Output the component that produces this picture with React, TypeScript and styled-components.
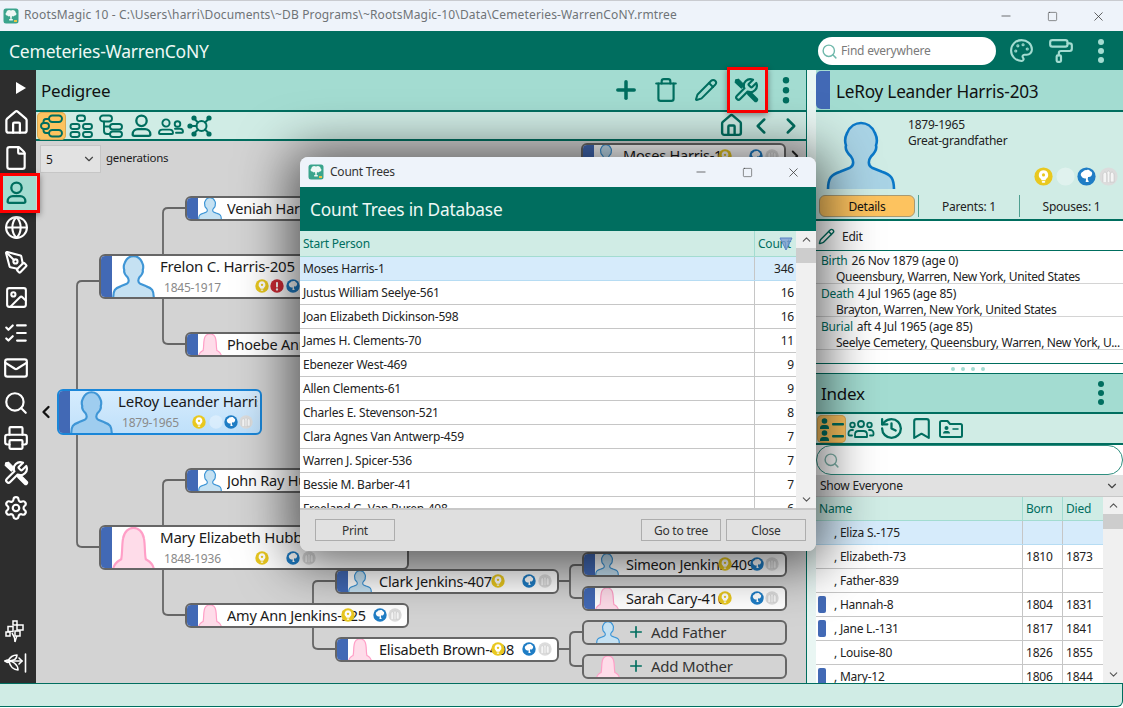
import React from "react";
import styled, { createGlobalStyle } from "styled-components";
import {
  Home, File, Globe, PenTool, Image, ListChecks, Mail, Search, Printer, Settings,
  Plus, Trash, Pencil, ChevronLeft, ChevronRight, ChevronDown, ChevronUp, Palette, PaintRoller,
  History, Bookmark, Minus, Square, X,
} from "lucide-react";

const GREEN = "#006e5f";
const TEAL = "#a3dcd1";
const PALE = "#d0ece5";
const SANS = `"Noto Sans", "Open Sans", sans-serif`;

const Global = createGlobalStyle`
  html, body { margin: 0; padding: 0; background: #fff; }
  body { font-family: ${SANS}; letter-spacing: -0.22px; color: #1a1a1a; }
  * { box-sizing: border-box; }
`;

const Page = styled.div`
  position: relative; width: 1123px; height: 708px; overflow: hidden;
  display: flex; flex-direction: column; border-top: 1px solid #c9cbd0;
`;
const TitleBar = styled.div`
  height: 30px; flex: none; display: flex; align-items: center; background: #eef3fa;
  padding: 0 2px 0 3px; font-size: 12px; color: #6f7377;
`;
const TitleText = styled.span` margin-left: 5px; margin-bottom: 3px; white-space: nowrap; flex: 1; letter-spacing: 0.14px; `;
const DialogTitleText = styled.span` margin-left: 6px; margin-bottom: 1px; white-space: nowrap; flex: 1; `;
const WinControls = styled.div` display: flex; flex: none; color: #333; `;
const WinButton = styled.div`
  width: 46px; height: 30px; display: flex; align-items: center; justify-content: center;
`;
const AppHeader = styled.div`
  height: 39px; flex: none; background: ${GREEN}; display: flex; align-items: center;
  padding: 0 2px 0 9px; color: #fff; font-size: 17.5px;
`;
const AppTitle = styled.div` flex: 1; color: #eef8f5; `;
const FindPill = styled.div`
  width: 178px; height: 28px; margin-top: 1px; border-radius: 14px; background: #fff; display: flex; align-items: center;
  padding-left: 3px; gap: 3px; font-size: 12px; color: #7a7a7a; margin-right: 5px; line-height: 28px;
`;
const HeaderIcon = styled.div`
  width: 40px; display: flex; justify-content: center; color: ${TEAL};
`;
const Body = styled.div` flex: 1; min-height: 0; display: flex; `;
const Sidebar = styled.div`
  width: 36px; flex: none; background: #2d2d2d; display: flex; flex-direction: column; padding-bottom: 4px;
  color: #fff;
`;
const SideItem = styled.div<{ $active?: boolean }>`
  height: 35px; flex: none; display: flex; align-items: center; justify-content: center; padding-right: 4px;
  background: ${(p) => (p.$active ? TEAL : "transparent")};
  color: ${(p) => (p.$active ? GREEN : "#fff")};
`;
const SidePlay = styled(SideItem)` padding: 0 0 0 6px; `;
const SideSpacer = styled.div` flex: 1; `;
const SideSmall = styled.div` height: 32px; flex: none; display: flex; align-items: center; justify-content: center; padding-right: 4px; `;
const Center = styled.div` width: 770px; flex: none; display: flex; flex-direction: column; `;
const PanelHeader = styled.div`
  height: 42px; flex: none; background: ${TEAL}; border-bottom: 2px solid ${GREEN}; display: flex; align-items: center;
  padding-left: 5px; font-size: 17px; color: #111;
`;
const PanelTitle = styled.div` flex: 1; padding-top: 1px; `;
const ActionIcon = styled.div`
  width: 40px; display: flex; justify-content: center; color: ${GREEN};
`;
const ToolRow = styled.div`
  height: 29px; flex: none; background: ${PALE}; border-bottom: 2px solid ${GREEN}; display: flex; align-items: center;
  padding-left: 1px; color: ${GREEN};
`;
const ToolBtn = styled.div<{ $active?: boolean }>`
  width: ${(p) => (p.$active ? 29 : 30)}px; height: 28px; display: flex; align-items: center; justify-content: center; border-radius: 5px;
  background: ${(p) => (p.$active ? "#fdc35f" : "transparent")};
  box-shadow: ${(p) => (p.$active ? "inset 0 0 0 1px #d9a956" : "none")};
`;
const ToolSpacer = styled.div` flex: 1; `;
const Canvas = styled.div` flex: 1; position: relative; background: #d3d3d3; overflow: hidden; `;
const Wires = styled.svg` position: absolute; left: 0; top: 0; `;
const GenRow = styled.div`
  position: absolute; left: 4px; top: 4px; display: flex; align-items: center; gap: 5px; font-size: 11.5px;
`;
const GenLabel = styled.span` padding-bottom: 3px; `;
const GenSelect = styled.div`
  width: 61px; height: 28px; background: #e2e2e2; border: 1px solid #c6c6c6; display: flex; align-items: center;
  justify-content: space-between; padding: 0 4px 0 5px; font-size: 12px;
`;
const NodeBox = styled.div<{ $x: number; $y: number; $w: number; $h: number; $sel?: boolean; $ghost?: boolean }>`
  position: absolute; left: ${(p) => p.$x - 36}px; top: ${(p) => p.$y - 141}px; width: ${(p) => p.$w}px; height: ${(p) => p.$h}px;
  border-radius: 6px; overflow: hidden; display: flex;
  border: 2px solid ${(p) => (p.$sel ? "#1a86d8" : "#666")};
  background: ${(p) => (p.$sel ? "linear-gradient(#d6ecfd, #bfe0fa)" : p.$ghost ? "transparent" : "#fff")};
`;
const NodeBar = styled.div<{ $hide?: boolean }>`
  width: 11px; flex: none; background: ${(p) => (p.$hide ? "transparent" : "#4269b5")};
`;
const NodeFace = styled.div<{ $w: number; $ml?: number }>`
  width: ${(p) => p.$w}px; margin-left: ${(p) => p.$ml ?? 0}px; flex: none; display: flex; align-items: flex-end;
`;
const NodeText = styled.div<{ $ml: number; $big?: boolean }>`
  margin-left: ${(p) => p.$ml}px; margin-right: 2px; min-width: 0; overflow: hidden; font-size: ${(p) => (p.$big ? 15 : 14.5)}px; white-space: nowrap; color: #1a1a1a;
  line-height: 20px;
`;
const NodeDates = styled.div` font-size: 12px; color: #8a8a8a; margin: 3px 0 0 4px; line-height: 17px; `;
const AddRow = styled.div`
  display: flex; align-items: center; gap: 6px; margin-left: 7px; padding-bottom: 2px; font-size: 15px; color: #333; white-space: nowrap;
`;
const BadgeSlot = styled.div<{ $x: number; $y: number }>`
  position: absolute; left: ${(p) => p.$x}px; top: ${(p) => p.$y}px; display: flex;
`;
const Splitter = styled.div`
  width: 10px; flex: none; background: #e9f6f3; border-left: 1.5px solid ${GREEN};
`;
const Right = styled.div` flex: 1; min-width: 0; display: flex; flex-direction: column; background: #fff; `;
const PersonHead = styled.div`
  height: 42px; flex: none; background: ${TEAL}; border-bottom: 2px solid ${GREEN}; display: flex; align-items: center;
  font-size: 17.2px; color: #111; padding-top: 2px;
`;
const ColorTab = styled.div`
  width: 14px; height: 38px; background: #4269b5; border-radius: 5px 0 0 5px; margin-right: 6px; margin-bottom: 2px;
`;
const PersonCard = styled.div`
  height: 81px; flex: none; background: ${PALE}; position: relative; display: flex;
`;
const BigFace = styled.div` width: 70px; margin: 9px 0 0 10px; flex: none; `;
const PersonInfo = styled.div` margin: 5px 0 0 12px; font-size: 12px; line-height: 16px; color: #222; `;
const PaneBadges = styled.div` position: absolute; left: 218px; top: 55px; display: flex; gap: 2.5px; `;
const TabRow = styled.div`
  height: 28px; flex: none; background: ${PALE}; border-bottom: 2px solid ${GREEN}; display: flex; align-items: flex-start; font-size: 12px;
  padding: 2px 0 0 3px;
`;
const DetailTab = styled.div`
  width: 96px; height: 22px; border-radius: 6px; background: #fdc35f; border: 1px solid #a99a72; display: flex;
  align-items: center; justify-content: center; color: #111; margin-right: 3px;
`;
const PlainTab = styled.div<{ $w?: number }>`
  ${(p) => (p.$w ? `width: ${p.$w}px; flex: none;` : "flex: 1;")}
  height: 22px; display: flex; align-items: center; justify-content: center; border-left: 1.5px solid #4f9f90;
  color: #222;
`;
const EditRow = styled.div`
  height: 30px; flex: none; border-bottom: 1.5px solid ${GREEN}; display: flex; align-items: center; gap: 7px; padding: 1px 0 0 2px;
  font-size: 12px; color: ${GREEN};
`;
const EditLabel = styled.span` color: #222; `;
const Facts = styled.div` height: 113px; flex: none; border-bottom: 1.5px solid ${GREEN}; `;
const Fact = styled.div`
  height: 33px; border-bottom: 1px solid #d4d4d4; padding: 1.5px 0 0 5px; font-size: 12px; line-height: 16px; color: #222; white-space: nowrap;
`;
const FactKey = styled.span` color: ${GREEN}; margin-right: 4px; `;
const FactPlace = styled.div` padding-left: 15px; letter-spacing: -0.32px; `;
const PaneGrip = styled.div`
  height: 9px; flex: none; display: flex; justify-content: center; align-items: center; gap: 6px; background: #fff; padding-right: 4px;
`;
const GripDot = styled.div` width: 4px; height: 4px; border-radius: 50%; background: ${TEAL}; `;
const IndexHead = styled.div`
  height: 41px; flex: none; background: ${TEAL}; border-bottom: 2px solid ${GREEN}; border-top: 1px solid ${GREEN}; display: flex; align-items: center;
  padding: 0 2px 0 5px; font-size: 17px; color: #111;
`;
const IndexTools = styled(ToolRow)` height: 31px; padding-left: 1px; `;
const SearchLine = styled.div`
  height: 30px; flex: none; margin: 0; border: 1.5px solid #2f8f80; border-radius: 15px; background: #fff; display: flex;
  align-items: center; padding-left: 6px; color: #7fb3aa;
`;
const ShowBar = styled.div`
  height: 22px; flex: none; background: #e1e1e1; border-bottom: 1px solid #c8c8c8; display: flex; align-items: center; justify-content: space-between;
  padding: 0 4px; font-size: 12px; color: #222;
`;
const GridWrap = styled.div` flex: 1; min-height: 0; display: flex; overflow: hidden; `;
const Grid = styled.div` flex: 1; min-width: 0; overflow: hidden; `;
const HeadRow = styled.div<{ $h: number }>`
  height: ${(p) => p.$h}px; display: flex; background: ${PALE}; border-bottom: 1px solid ${TEAL}; color: ${GREEN}; font-size: 12px;
`;
const DataRow = styled.div<{ $sel?: boolean }>`
  height: 24px; flex: none; display: flex; font-size: 12px; color: #222;
  background: ${(p) => (p.$sel ? "#d6ebfb" : "#fff")};
  border-bottom: 1px solid ${(p) => (p.$sel ? "#b6dcf3" : "#c6c6c6")};
`;
const Cell = styled.div<{ $w?: number; $right?: boolean; $pl?: number }>`
  ${(p) => (p.$w ? `width: ${p.$w}px; flex: none; border-left: 1px solid #c6c6c6;` : "flex: 1; min-width: 0;")}
  padding-left: ${(p) => p.$pl ?? 3}px; padding-right: ${(p) => (p.$right ? 2 : 0)}px; display: flex; align-items: center;
  white-space: nowrap; overflow: hidden;
  justify-content: ${(p) => (p.$right ? "flex-end" : "flex-start")};
`;
const HeadCell = styled(Cell)` border-left-color: ${TEAL}; position: relative; `;
const Mark = styled.div<{ $on?: boolean }>`
  width: 8px; height: 17px; border-radius: 2px; background: ${(p) => (p.$on ? "#4269b5" : "transparent")}; flex: none; margin-right: 8px; margin-left: -1px;
`;
const ScrollBar = styled.div`
  width: 20px; flex: none; background: #f0f0f0; display: flex; flex-direction: column; align-items: center; color: #555;
`;
const ScrollUp = styled.div` height: 17px; flex: none; display: flex; align-items: center; `;
const ScrollThumb = styled.div` width: 100%; height: 15px; flex: none; background: #cdcdcd; `;
const ScrollRest = styled.div` flex: 1; `;
const ScrollDown = styled.div` height: 17px; flex: none; display: flex; align-items: center; `;
const Status = styled.div`
  height: 24px; flex: none; background: ${PALE}; border-top: 1.5px solid ${GREEN}; border-bottom: 1.5px solid ${GREEN};
  border-right: 1.5px solid ${GREEN}; border-radius: 0 0 6px 0; margin-bottom: 1px;
`;

const Dialog = styled.div`
  position: absolute; left: 300px; top: 156px; width: 516px; height: 394px; display: flex; flex-direction: column;
  border-radius: 8px; overflow: hidden; z-index: 5; background: #dfdfdf;
  box-shadow: 0 4px 52px 10px rgba(0, 0, 0, 0.6);
`;
const DTitle = styled.div`
  height: 30px; flex: none; background: #eef3fa; display: flex; align-items: center; padding-left: 8px; font-size: 12px; color: #333;
`;
const DGreen = styled.div`
  height: 44px; flex: none; background: ${GREEN}; color: #eef8f5; font-size: 17.3px; display: flex; align-items: center; padding-left: 10px;
`;
const DTableWrap = styled.div` flex: 1; min-height: 0; display: flex; background: #fff; overflow: hidden; `;
const DFooter = styled.div`
  height: 43px; flex: none; background: #dfdfdf; border-top: 2px solid #c8c8c8; display: flex; align-items: flex-start; padding: 9px 10px 0 15px;
  gap: 5px;
`;
const DButton = styled.div`
  width: 80px; height: 22px; border: 1px solid #adadad; background: #e1e1e1; display: flex; align-items: center; justify-content: center; font-size: 12px; color: #333;
`;
const FooterGap = styled.div` flex: 1; `;
const FilterMark = styled.svg` position: absolute; right: 3px; top: 6px; `;

const RedFrame = styled.div<{ $x: number; $y: number; $w: number; $h: number }>`
  position: absolute; left: ${(p) => p.$x}px; top: ${(p) => p.$y}px; width: ${(p) => p.$w}px; height: ${(p) => p.$h}px;
  border: 3px solid #f00; z-index: 3; pointer-events: none; box-shadow: 0 2px 6px rgba(0,0,0,.4);
`;
const SidePointer = styled.div`
  position: absolute; left: 36px; top: 401px; color: #111; z-index: 1; display: flex;
`;
const TreeArrow = styled.div` position: absolute; left: 750px; top: 6px; color: #222; display: flex; `;

const Logo = ({ s = 16 }: { s?: number }) => (
  <svg width={s} height={s} viewBox="0 0 16 16">
    <rect x="0.5" y="0.5" width="15" height="15" rx="2.5" fill="#3aa48c" />
    <path d="M8 2.500c2-1.400 4.600-.2 4.600 1.900 1.400 .6 1 3-.8 3.200-.8 1-2 1-2.800.4L8.600 11h1.200v1.500H6.200V11h1.200L7 8c-.8.6-2 .6-2.800-.4-1.800-.2-2.200-2.600-.8-3.200C3.400 2.300 6 1.100 8 2.500z" fill="#eef8f5" />
    <rect x="11" y="12" width="3" height="2" fill="#e8c447" />
  </svg>
);

const stroke = { fill: "none", stroke: "currentColor", strokeWidth: 2, strokeLinecap: "round" as const, strokeLinejoin: "round" as const };

const PersonGlyph = ({ s = 24 }: { s?: number }) => (
  <svg width={s} height={s} viewBox="0 0 24 24" {...stroke} strokeWidth={2.2}>
    <circle cx="12" cy="7.5" r="5" />
    <path d="M3.5 20.500c0-3 2.400-5 5-5h7c2.600 0 5 2 5 5 0 1-.6 1.500-1.500 1.500H5c-.9 0-1.500-.5-1.500-1.500z" />
  </svg>
);
const TwoPeople = ({ s = 28 }: { s?: number }) => (
  <svg width={s} height={s} viewBox="0 0 28 24" {...stroke} strokeWidth={1.9}>
    <circle cx="9" cy="9" r="3.600" /><circle cx="20.500" cy="10" r="2.800" />
    <path d="M2 19c0-2 1.500-3.400 3.400-3.400h7.200c1.900 0 3.400 1.400 3.400 3.400 0 .6-.4 1-1 1H3c-.6 0-1-.4-1-1z" />
    <path d="M18 14.800h5c1.700 0 3 1.200 3 3 0 .6-.4 1-1 1h-6" />
  </svg>
);
const Pedigree = () => (
  <svg width="26" height="26" viewBox="0 0 26 26" {...stroke} strokeWidth={1.9}>
    <rect x="10" y="2.500" width="13" height="6.500" rx="3.200" /><rect x="10" y="17" width="13" height="6.500" rx="3.200" />
    <rect x="2" y="10" width="8" height="6" rx="3" /><path d="M10 6H7Q4.500 6 4.500 9V10M4.500 16v1Q4.500 20 7 20h3" />
  </svg>
);
const Family = () => (
  <svg width="26" height="26" viewBox="0 0 26 26" {...stroke} strokeWidth={1.9}>
    <rect x="9" y="2.500" width="8" height="5.500" rx="2.500" />
    <rect x="2.500" y="11" width="9" height="5" rx="2.400" /><rect x="15" y="11" width="9" height="5" rx="2.400" />
    <rect x="2.500" y="19" width="9" height="5" rx="2.400" /><rect x="15" y="19" width="9" height="5" rx="2.400" />
  </svg>
);
const Descend = () => (
  <svg width="26" height="26" viewBox="0 0 26 26" {...stroke} strokeWidth={1.9}>
    <rect x="2" y="2.500" width="12" height="6" rx="3" /><rect x="12" y="11" width="12" height="5.500" rx="2.700" /><rect x="12" y="18.500" width="12" height="5.500" rx="2.700" />
    <path d="M6 8.500V18q0 3 3 3h3M6 13.500h6" />
  </svg>
);
const Network = () => (
  <svg width="28" height="26" viewBox="0 0 28 26" {...stroke} strokeWidth={2}>
    <circle cx="14.500" cy="13" r="5" />
    <path d="M11 9.500 7.500 6M18 9.500 21.500 6M18 16.500 21.500 20M11 16.500 7.500 20M9.500 13H4" />
    <g fill="currentColor" stroke="none">
      <circle cx="7" cy="5" r="2.600" /><circle cx="22" cy="5" r="2.600" /><circle cx="22" cy="21" r="2.600" /><circle cx="7" cy="21" r="2.600" /><circle cx="3" cy="13" r="2.600" />
    </g>
  </svg>
);
const Tools = ({ s = 24 }: { s?: number }) => (
  <svg width={s} height={s} viewBox="0 0 24 24" {...stroke} strokeWidth={2}>
    <path d="M14.7 6.300a1 1 0 0 0 0 1.400l1.600 1.600a1 1 0 0 0 1.400 0l3.770-3.770a6 6 0 0 1-7.940 7.940l-6.910 6.910a2.120 2.120 0 0 1-3-3l6.910-6.910a6 6 0 0 1 7.940-7.940l-3.760 3.760z" />
    <path d="M2.500 2.500 5 2l5.500 5.500-2.800 2.800L2 5z" fill="currentColor" strokeWidth={1} />
    <path d="M15 15l6 6" strokeWidth={4.400} />
  </svg>
);
const Dots = ({ r = 3.200, gap = 10 }: { r?: number; gap?: number }) => (
  <svg width="10" height={gap * 2 + r * 2 + 2} viewBox={`0 0 10 ${gap * 2 + r * 2 + 2}`}>
    {[0, 1, 2].map((i) => <circle key={i} cx="5" cy={r + 1 + gap * i} r={r} fill="currentColor" />)}
  </svg>
);
const ListPeople = () => (
  <svg width="28" height="26" viewBox="0 0 28 26" fill="currentColor">
    <circle cx="6.500" cy="5" r="2.800" /><path d="M2 12c0-2 1.500-3 3-3h3c1.500 0 3 1 3 3v1H2z" />
    <circle cx="6.500" cy="17" r="2.800" /><path d="M2 24c0-2 1.500-3 3-3h3c1.500 0 3 1 3 3v1H2z" />
    <rect x="14" y="7" width="12" height="2.400" rx="1" /><rect x="14" y="19" width="12" height="2.400" rx="1" />
  </svg>
);
const ThreePeople = () => (
  <svg width="28" height="24" viewBox="0 0 28 24" {...stroke} strokeWidth={1.800}>
    <circle cx="14" cy="7" r="3" /><circle cx="5.500" cy="8" r="2.300" /><circle cx="22.500" cy="8" r="2.300" />
    <path d="M8 20v-2.500c0-2 1.500-3.500 3.500-3.500h5c2 0 3.500 1.500 3.500 3.500V20z" />
    <path d="M6 13H4.500C3 13 1.500 14.500 1.500 16v1.500c0 .6.400 1 1 1H5M22 13h1.500c1.500 0 3 1.500 3 3v1.500c0 .6-.4 1-1 1H23" />
  </svg>
);
const FolderPerson = () => (
  <svg width="26" height="24" viewBox="0 0 26 24" {...stroke} strokeWidth={2}>
    <path d="M2 5.500C2 4.500 2.700 4 3.500 4h6L12 7h10.500c.8 0 1.500.7 1.500 1.500v10c0 .8-.7 1.500-1.500 1.500h-19C2.700 20 2 19.300 2 18.500z" />
    <circle cx="8.500" cy="11" r="2" fill="currentColor" stroke="none" />
    <path d="M5 16.500c0-1.500 1-2.500 2.200-2.500h2.600c1.200 0 2.200 1 2.200 2.500z" fill="currentColor" stroke="none" />
    <path d="M15 12h5" strokeWidth={1.500} />
  </svg>
);
const BoxTree = () => (
  <svg width="22" height="24" viewBox="0 0 22 24" fill="none" stroke="#fff" strokeWidth="1.500">
    <rect x="8" y="2" width="4" height="4" /><rect x="3" y="7.500" width="5" height="5" /><rect x="12" y="6" width="6" height="5" />
    <rect x="1" y="13" width="4" height="4" /><rect x="10" y="12" width="5" height="5" /><path d="M10 23q0-5-3-9M10 23q1-4 2-6" />
  </svg>
);
const LeafDock = () => (
  <svg width="24" height="22" viewBox="0 0 24 22" fill="none" stroke="#fff" strokeWidth="1.600" strokeLinejoin="round" strokeLinecap="round">
    <path d="M21.500 2v18M1 9h17" />
    <path d="M4 9c2-4 6-6 9-6 0 3-2 6-9 6zM5 9c3 0 9 3 9 9-4 0-8-3-9-9z" />
    <path d="M1 9c2-1 4-1 5 0-1 2-3 2-5 0z" />
    <path d="M18 9 15 6M18 9l-3 3" />
  </svg>
);

const MaleFace = ({ w, h, soft, deep }: { w: number; h: number; soft?: boolean; deep?: boolean }) => (
  <svg width={w} height={h} viewBox="0 0 70 67" preserveAspectRatio="none">
    <path
      d="M2 68C2 56 5 53 14 50L24 46C28 44 28 39 25 35 21 31 19 27 20 24 18.500 20 19 16 21 12 24 5 30 2 35 2 40 2 46 5 49 12 51 16 51.500 20 50 24 51 27 49 31 45 35 42 39 42 44 46 46L56 50C65 53 68 56 68 68"
      fill={deep ? "#9fcdef" : soft ? "#c5e1f2" : "#a9d3e5"} stroke={soft || deep ? "#3f96d6" : "#0a78c8"} strokeWidth={soft || deep ? 3.500 : 2.600}
    />
  </svg>
);
const FemaleFace = ({ w, h }: { w: number; h: number }) => (
  <svg width={w} height={h} viewBox="0 0 70 67" preserveAspectRatio="none">
    <path
      d="M2 68C4 58 10 56 15 53 17 44 16 30 18 20 20 8 28 3 35 3 42 3 50 8 52 20 54 30 53 44 55 53 60 56 66 58 68 68"
      fill="#fedce9" stroke="#ff9fc7" strokeWidth="3.500"
    />
  </svg>
);

type BadgeKind = "bulb" | "red" | "globe" | "grave" | "empty";
const Badge = ({ kind, s = 14 }: { kind: BadgeKind; s?: number }) => {
  const fill = { bulb: "#e9c81f", red: "#cf2a35", globe: "#1f7dc5", grave: "#dcdcdc", empty: "rgba(255,255,255,.35)" }[kind];
  return (
    <svg width={s} height={s} viewBox="0 0 24 24">
      <circle cx="12" cy="12" r="11.500" fill={fill} />
      {kind === "bulb" && <><path d="M12 4a6 6 0 0 0-3.500 10.800c.6.500.9 1.200.9 1.900h5.200c0-.7.3-1.400.9-1.900A6 6 0 0 0 12 4z" fill="#fff" /><rect x="9.800" y="17.800" width="4.400" height="2.200" rx="1" fill="#fff" /><circle cx="12" cy="10" r="2" fill="#e9c81f" /></>}
      {kind === "red" && <><rect x="10.300" y="5" width="3.400" height="9.500" rx="1.500" fill="#fff" /><circle cx="12" cy="18" r="2" fill="#fff" /></>}
      {kind === "globe" && <path d="M12 4c2-1 4 0 5 1.500 2 .5 3 3 1.500 5-.5 2-3 2.500-4.500 2l-.5 3 1.500 3.500h-4l.5-4.500C9 15 6 14 5.500 11.500 4 10 5 6.500 7.500 6 8.500 4.500 10.500 3.500 12 4z" fill="#fff" />}
      {kind === "grave" && <path d="M5 19V10c0-2 1-3.500 2.500-3.500S10 8 10 10v9M10 19V8c0-2 1-3 2-3s2 1 2 3v11M14 19v-9c0-2 1-3.500 2.500-3.500S19 8 19 10v9z" fill="#f5f5f5" stroke="#c4c4c4" strokeWidth=".8" />}
    </svg>
  );
};

// badge entries are the page x of the badge centre
type TreeNode = {
  x: number; y: number; w: number; h: number; name?: string; add?: string; dates?: string; female?: boolean;
  faceW: number; textMl: number; sel?: boolean; badges: [number, BadgeKind][]; cy: number;
};
const small = { w: 224, h: 25, faceW: 24, textMl: 5, cy: 12 };
const right = { w: 205, h: 25, faceW: 24, textMl: 7, cy: 12 };
const nodes: TreeNode[] = [
  { ...right, x: 581, y: 143, textMl: 5, cy: 13, name: "Moses Harris-1", badges: [[725, "bulb"], [756, "globe"], [772, "grave"]] },
  { ...small, x: 185, y: 196, name: "Veniah Harris-204", badges: [] },
  { x: 99, y: 254, w: 310, h: 45, faceW: 43, textMl: 5, cy: 32, name: "Frelon C. Harris-205", dates: "1845-1917", badges: [[262, "bulb"], [277, "red"], [293, "globe"]] },
  { ...small, x: 185, y: 332, female: true, name: "Phoebe Ann Fuller-206", badges: [] },
  { x: 57, y: 389, w: 205, h: 46, faceW: 43, textMl: 5, cy: 33, sel: true, name: "LeRoy Leander Harris-203", dates: "1879-1965", badges: [[199, "bulb"], [216, "empty"], [231, "globe"], [246, "grave"]] },
  { ...small, x: 185, y: 468, name: "John Ray Hubbell-324", badges: [] },
  { x: 99, y: 525, w: 310, h: 45, faceW: 43, textMl: 5, cy: 33, female: true, name: "Mary Elizabeth Hubbell-323", dates: "1848-1936", badges: [[262, "bulb"], [293, "globe"], [309, "grave"]] },
  { ...small, x: 185, y: 603, female: true, name: "Amy Ann Jenkins-325", badges: [[348, "bulb"], [380, "globe"], [395, "grave"]] },
  { x: 335, y: 569, w: 224, h: 25, faceW: 24, textMl: 7, cy: 12, name: "Clark Jenkins-407", badges: [[498, "bulb"], [529, "globe"], [545, "grave"]] },
  { x: 335, y: 637, w: 224, h: 25, faceW: 24, textMl: 7, cy: 12, female: true, name: "Elisabeth Brown-408", badges: [[498, "bulb"], [529, "globe"], [545, "grave"]] },
  { ...right, x: 582, y: 552, name: "Simeon Jenkins-409", badges: [[725, "bulb"], [757, "globe"], [772, "grave"]] },
  { ...right, x: 582, y: 586, female: true, name: "Sarah Cary-410", badges: [[725, "bulb"], [757, "globe"], [772, "grave"]] },
  { ...right, x: 582, y: 620, add: "Add Father", badges: [] },
  { ...right, x: 582, y: 654, female: true, add: "Add Mother", badges: [] },
];

const Tree = () => (
  <>
    <Wires width="770" height="543" viewBox="36 141 770 543" fill="none" stroke="#666" strokeWidth="1.800">
      <path d="M77 389V286Q77 281 82 281H99M77 435V542Q77 547 82 547H99" />
      <path d="M163 254V213Q163 208 168 208H185M163 299V339Q163 344 168 344H185" />
      <path d="M163 525V485Q163 480 168 480H185M163 570V610Q163 615 168 615H185" />
      <path d="M409 615H313M313 615V586Q313 581 318 581H335M313 615V644Q313 649 318 649H335" />
      <path d="M559 581H570M570 570Q570 565 575 565H582M570 570V593Q570 598 575 598H582" />
      <path d="M559 649H570M570 637Q570 632 575 632H582M570 637V661Q570 666 575 666H582" />
    </Wires>
    {nodes.map((n) => {
      const big = n.h > 40;
      return (
        <NodeBox key={n.name ?? n.add} $x={n.x} $y={n.y} $w={n.w} $h={n.h} $sel={n.sel} $ghost={!!n.add}>
          <NodeBar $hide={!!n.add} />
          <NodeFace $w={n.faceW} $ml={n.add ? 1 : 0}>
            {n.female ? <FemaleFace w={n.faceW} h={big ? 42 : 22} /> : <MaleFace w={n.faceW} h={big ? 42 : 22} soft={!n.sel} deep={n.sel} />}
          </NodeFace>
          {n.add ? (
            <AddRow><Plus size={18} color={GREEN} strokeWidth={2.200} />{n.add}</AddRow>
          ) : (
            <NodeText $ml={n.textMl} $big={big}>
              {n.name}
              {n.dates && <NodeDates>{n.dates}</NodeDates>}
            </NodeText>
          )}
          {n.badges.map(([cx, k], i) => (
            <BadgeSlot key={i} $x={cx - n.x - 9} $y={n.cy - 9}><Badge kind={k} /></BadgeSlot>
          ))}
        </NodeBox>
      );
    })}
    <TreeArrow><ChevronRight size={18} strokeWidth={2.500} /></TreeArrow>
    <GenRow>
      <GenSelect>5<ChevronDown size={14} color="#444" /></GenSelect>
      <GenLabel>generations</GenLabel>
    </GenRow>
  </>
);

const treeCounts: [string, number][] = [
  ["Moses Harris-1", 346], ["Justus William Seelye-561", 16], ["Joan Elizabeth Dickinson-598", 16],
  ["James H. Clements-70", 11], ["Ebenezer West-469", 9], ["Allen Clements-61", 9], ["Charles E. Stevenson-521", 8],
  ["Clara Agnes Van Antwerp-459", 7], ["Warren J. Spicer-536", 7], ["Bessie M. Barber-41", 7], ["Freeland G. Van Buren-408", 6],
];
const index: [string, string, string, boolean][] = [
  [", Eliza S.-175", "", "", false], [", Elizabeth-73", "1810", "1873", false], [", Father-839", "", "", false],
  [", Hannah-8", "1804", "1831", true], [", Jane L.-131", "1817", "1841", true], [", Louise-80", "1826", "1855", false],
  [", Mary-12", "1806", "1844", true],
];

export default function App() {
  return (
    <Page>
      <Global />
      <TitleBar>
        <Logo />
        <TitleText>RootsMagic 10 - C:\Users\harri\Documents\~DB Programs\~RootsMagic-10\Data\Cemeteries-WarrenCoNY.rmtree</TitleText>
        <WinControls>
          <WinButton><Minus size={14} strokeWidth={1.200} /></WinButton>
          <WinButton><Square size={11} strokeWidth={1.200} /></WinButton>
          <WinButton><X size={15} strokeWidth={1.200} /></WinButton>
        </WinControls>
      </TitleBar>
      <AppHeader>
        <AppTitle>Cemeteries-WarrenCoNY</AppTitle>
        <FindPill><Search size={17} color="#6fb8ab" strokeWidth={2} />Find everywhere</FindPill>
        <HeaderIcon><Palette size={25} strokeWidth={2} /></HeaderIcon>
        <HeaderIcon><PaintRoller size={26} strokeWidth={2} /></HeaderIcon>
        <HeaderIcon><Dots r={3} gap={9} /></HeaderIcon>
      </AppHeader>
      <Body>
        <Sidebar>
          <SidePlay><svg width="12" height="14" viewBox="0 0 12 14"><path d="M1 1l10 6-10 6z" fill="#fff" /></svg></SidePlay>
          <SideItem><Home size={27} strokeWidth={2} /></SideItem>
          <SideItem><File size={26} strokeWidth={2} /></SideItem>
          <SideItem $active><PersonGlyph s={25} /></SideItem>
          <SideItem><Globe size={25} strokeWidth={2} /></SideItem>
          <SideItem><PenTool size={25} strokeWidth={2} /></SideItem>
          <SideItem><Image size={25} strokeWidth={2} /></SideItem>
          <SideItem><ListChecks size={26} strokeWidth={2} /></SideItem>
          <SideItem><Mail size={26} strokeWidth={2} /></SideItem>
          <SideItem><Search size={26} strokeWidth={2} /></SideItem>
          <SideItem><Printer size={26} strokeWidth={2} /></SideItem>
          <SideItem><Tools s={26} /></SideItem>
          <SideItem><Settings size={26} strokeWidth={2} /></SideItem>
          <SideSpacer />
          <SideSmall><BoxTree /></SideSmall>
          <SideSmall><LeafDock /></SideSmall>
        </Sidebar>
        <Center>
          <PanelHeader>
            <PanelTitle>Pedigree</PanelTitle>
            <ActionIcon><Plus size={28} strokeWidth={3} /></ActionIcon>
            <ActionIcon><Trash size={26} strokeWidth={2} /></ActionIcon>
            <ActionIcon><Pencil size={24} strokeWidth={2} /></ActionIcon>
            <ActionIcon><Tools s={26} /></ActionIcon>
            <ActionIcon><Dots /></ActionIcon>
          </PanelHeader>
          <ToolRow>
            <ToolBtn $active><Pedigree /></ToolBtn>
            <ToolBtn><Family /></ToolBtn>
            <ToolBtn><Descend /></ToolBtn>
            <ToolBtn><PersonGlyph s={25} /></ToolBtn>
            <ToolBtn><TwoPeople /></ToolBtn>
            <ToolBtn><Network /></ToolBtn>
            <ToolSpacer />
            <ToolBtn><Home size={25} strokeWidth={2.300} /></ToolBtn>
            <ToolBtn><ChevronLeft size={26} strokeWidth={2.300} /></ToolBtn>
            <ToolBtn><ChevronRight size={26} strokeWidth={2.300} /></ToolBtn>
          </ToolRow>
          <Canvas><Tree /></Canvas>
        </Center>
        <Splitter />
        <Right>
          <PersonHead><ColorTab />LeRoy Leander Harris-203</PersonHead>
          <PersonCard>
            <BigFace><MaleFace w={70} h={68} /></BigFace>
            <PersonInfo>1879-1965<br />Great-grandfather</PersonInfo>
            <PaneBadges>
              <Badge kind="bulb" s={19} /><Badge kind="empty" s={19} /><Badge kind="globe" s={19} /><Badge kind="grave" s={19} />
            </PaneBadges>
          </PersonCard>
          <TabRow>
            <DetailTab>Details</DetailTab>
            <PlainTab $w={101}>Parents: 1</PlainTab>
            <PlainTab>Spouses: 1</PlainTab>
          </TabRow>
          <EditRow><Pencil size={17} strokeWidth={2} /><EditLabel>Edit</EditLabel></EditRow>
          <Facts>
            <Fact><FactKey>Birth</FactKey>26 Nov 1879 (age 0)<FactPlace>Queensbury, Warren, New York, United States</FactPlace></Fact>
            <Fact><FactKey>Death</FactKey>4 Jul 1965 (age 85)<FactPlace>Brayton, Warren, New York, United States</FactPlace></Fact>
            <Fact><FactKey>Burial</FactKey>aft 4 Jul 1965 (age 85)<FactPlace>Seelye Cemetery, Queensbury, Warren, New York, U...</FactPlace></Fact>
          </Facts>
          <PaneGrip><GripDot /><GripDot /><GripDot /><GripDot /></PaneGrip>
          <IndexHead>
            <PanelTitle>Index</PanelTitle>
            <ActionIcon><Dots r={3} gap={9} /></ActionIcon>
          </IndexHead>
          <IndexTools>
            <ToolBtn $active><ListPeople /></ToolBtn>
            <ToolBtn><ThreePeople /></ToolBtn>
            <ToolBtn><History size={25} strokeWidth={2.200} /></ToolBtn>
            <ToolBtn><Bookmark size={25} strokeWidth={2} /></ToolBtn>
            <ToolBtn><FolderPerson /></ToolBtn>
          </IndexTools>
          <SearchLine><Search size={17} strokeWidth={2} /></SearchLine>
          <ShowBar>Show Everyone<ChevronDown size={14} color="#444" /></ShowBar>
          <GridWrap>
            <Grid>
              <HeadRow $h={24}>
                <HeadCell>Name</HeadCell>
                <HeadCell $w={40}>Born</HeadCell>
                <HeadCell $w={41}>Died</HeadCell>
              </HeadRow>
              {index.map(([n, b, d, m], i) => (
                <DataRow key={n} $sel={i === 0}>
                  <Cell><Mark $on={m} />{n}</Cell>
                  <Cell $w={40}>{b}</Cell>
                  <Cell $w={41}>{d}</Cell>
                </DataRow>
              ))}
            </Grid>
            <ScrollBar>
              <ScrollUp><ChevronUp size={13} /></ScrollUp>
              <ScrollThumb />
              <ScrollRest />
              <ScrollDown><ChevronDown size={13} /></ScrollDown>
            </ScrollBar>
          </GridWrap>
        </Right>
      </Body>
      <Status />

      <RedFrame $x={0} $y={172} $w={40} $h={40} />
      <RedFrame $x={727} $y={66} $w={41} $h={46} />
      <SidePointer><ChevronLeft size={20} strokeWidth={2.800} /></SidePointer>

      <Dialog>
        <DTitle>
          <Logo />
          <DialogTitleText>Count Trees</DialogTitleText>
          <WinControls>
            <WinButton><Minus size={14} strokeWidth={1.200} /></WinButton>
            <WinButton><Square size={11} strokeWidth={1.200} /></WinButton>
            <WinButton><X size={15} strokeWidth={1.200} /></WinButton>
          </WinControls>
        </DTitle>
        <DGreen>Count Trees in Database</DGreen>
        <DTableWrap>
          <Grid>
            <HeadRow $h={26}>
              <HeadCell>Start Person</HeadCell>
              <HeadCell $w={42}>Count
                <FilterMark width="14" height="14" viewBox="0 0 14 14"><path d="M1 1h12L7 13z" fill="#7e9fd6" fillOpacity=".8" stroke="#5b82c2" /></FilterMark>
              </HeadCell>
            </HeadRow>
            {treeCounts.map(([n, c], i) => (
              <DataRow key={n} $sel={i === 0}>
                <Cell>{n}</Cell>
                <Cell $w={42} $right>{c}</Cell>
              </DataRow>
            ))}
          </Grid>
          <ScrollBar>
            <ScrollUp><ChevronUp size={13} /></ScrollUp>
            <ScrollThumb />
            <ScrollRest />
            <ScrollDown><ChevronDown size={13} /></ScrollDown>
          </ScrollBar>
        </DTableWrap>
        <DFooter>
          <DButton>Print</DButton>
          <FooterGap />
          <DButton>Go to tree</DButton>
          <DButton>Close</DButton>
        </DFooter>
      </Dialog>
    </Page>
  );
}
